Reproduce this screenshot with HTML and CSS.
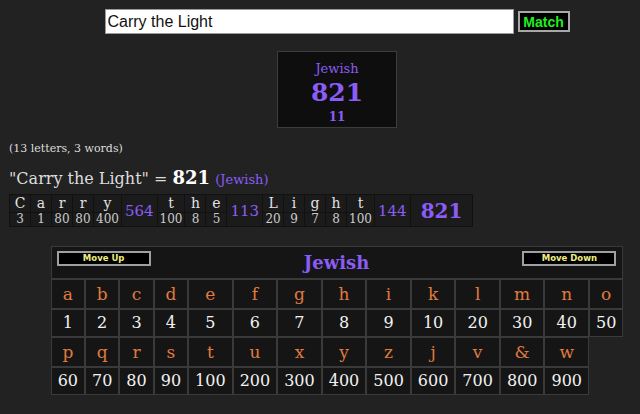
FILE: index.html
```html
<!DOCTYPE html>
<html>
<head>
<meta charset="utf-8">
<title>Gematria - Carry the Light</title>
<link rel="stylesheet" href="styles.css">
</head>
<body>
<div class="top">
  <form class="search">
    <input class="query" type="text" value="Carry the Light">
    <button class="match" type="button">Match</button>
  </form>
  <div class="scorebox">
    <div class="cipher">Jewish</div>
    <div class="total">821</div>
    <div class="reduced">11</div>
  </div>
</div>

<div class="counts">(13 letters, 3 words)</div>
<div class="phrase">"Carry the Light" = <b class="phrase-total">821</b> <span class="cname">(Jewish)</span></div>

<table class="breakdown">
  <tr>
    <td class="bl">C</td><td class="bl">a</td><td class="bl">r</td><td class="bl">r</td><td class="bl">y</td>
    <td class="bsum" rowspan="2">564</td>
    <td class="bl">t</td><td class="bl">h</td><td class="bl">e</td>
    <td class="bsum" rowspan="2">113</td>
    <td class="bl">L</td><td class="bl">i</td><td class="bl">g</td><td class="bl">h</td><td class="bl">t</td>
    <td class="bsum" rowspan="2">144</td>
    <td class="btotal" rowspan="2">821</td>
  </tr>
  <tr>
    <td class="bn">3</td><td class="bn">1</td><td class="bn">80</td><td class="bn">80</td><td class="bn">400</td>
    <td class="bn">100</td><td class="bn">8</td><td class="bn">5</td>
    <td class="bn">20</td><td class="bn">9</td><td class="bn">7</td><td class="bn">8</td><td class="bn">100</td>
  </tr>
</table>

<div class="chartwrap">
<table class="chart">
  <tr>
    <td class="chart-head" colspan="14">
      <div class="head-row">
        <button class="move" type="button">Move Up</button>
        <span class="chart-title">Jewish</span>
        <button class="move" type="button">Move Down</button>
      </div>
    </td>
  </tr>
  <tr class="letters">
    <td>a</td><td>b</td><td>c</td><td>d</td><td>e</td><td>f</td><td>g</td><td>h</td><td>i</td><td>k</td><td>l</td><td>m</td><td>n</td><td>o</td>
  </tr>
  <tr class="values">
    <td>1</td><td>2</td><td>3</td><td>4</td><td>5</td><td>6</td><td>7</td><td>8</td><td>9</td><td>10</td><td>20</td><td>30</td><td>40</td><td>50</td>
  </tr>
  <tr class="letters">
    <td>p</td><td>q</td><td>r</td><td>s</td><td>t</td><td>u</td><td>x</td><td>y</td><td>z</td><td>j</td><td>v</td><td>&amp;</td><td>w</td>
  </tr>
  <tr class="values">
    <td>60</td><td>70</td><td>80</td><td>90</td><td>100</td><td>200</td><td>300</td><td>400</td><td>500</td><td>600</td><td>700</td><td>800</td><td>900</td>
  </tr>
</table>
</div>
</body>
</html>
```

FILE: styles.css
```css
html, body {
  margin: 0;
  padding: 0;
}
body {
  background: #222222;
  color: #dddddd;
  font-family: "DejaVu Serif", serif;
  width: 640px;
  height: 414px;
  overflow: hidden;
}

.top {
  padding: 9px 0 0 34px;
  display: flex;
  flex-direction: column;
  align-items: center;
}
.search {
  display: flex;
  align-items: center;
  gap: 4px;
  margin: 0;
}
.query {
  width: 409px;
  height: 25px;
  box-sizing: border-box;
  border: 1px solid #9a9a9a;
  background: #ffffff;
  color: #111111;
  font-family: "Liberation Sans", Arial, sans-serif;
  font-size: 16px;
  padding: 0 2px;
  margin: 0;
  outline: none;
}
.match {
  width: 52px;
  height: 21px;
  box-sizing: border-box;
  background: #000000;
  border: 2px solid #a8a8a8;
  color: #22ee22;
  font-family: "Liberation Sans", Arial, sans-serif;
  font-weight: bold;
  font-size: 14px;
  padding: 0;
  margin: 0;
}

.scorebox {
  margin-top: 17px;
  width: 120px;
  height: 77px;
  box-sizing: border-box;
  background: #0e0e0e;
  border: 1px solid #3c3c3c;
  display: flex;
  flex-direction: column;
  align-items: center;
  padding-top: 9px;
  color: #8b5cf6;
}
.cipher {
  font-size: 13px;
  line-height: 16px;
}
.total {
  font-size: 25px;
  font-weight: bold;
  line-height: 32px;
}
.reduced {
  font-size: 12px;
  font-weight: bold;
  line-height: 16px;
}

.counts {
  margin: 14px 0 0 9px;
  font-size: 11px;
  line-height: 14px;
  color: #dddddd;
}
.phrase {
  margin: 12px 0 0 9px;
  font-size: 16px;
  line-height: 20px;
  color: #dddddd;
}
.phrase-total {
  font-size: 18px;
  color: #ffffff;
}
.cname {
  font-size: 13px;
  color: #8b5cf6;
}

.breakdown {
  margin: 4px 0 0 9px;
  border-collapse: separate;
  border-spacing: 1px;
  background: #111111;
}
.breakdown td {
  background: #1b1b1b;
  text-align: center;
  padding: 0 2px;
}
.bl {
  min-width: 16px;
  font-size: 14px;
  line-height: 17px;
  color: #e2e2e2;
}
.bn {
  font-size: 12px;
  line-height: 13px;
  color: #cccccc;
}
.breakdown .bsum {
  font-size: 15px;
  color: #8b5cf6;
  padding: 0 3px;
}
.breakdown .btotal {
  font-size: 20px;
  font-weight: bold;
  color: #8b5cf6;
  padding: 0 10px;
}

.chartwrap {
  margin-top: 19px;
  padding-left: 34px;
  display: flex;
  justify-content: center;
}
.chart {
  border-collapse: separate;
  border-spacing: 0;
}
.chart td {
  background: #151515;
  border: 1px solid #3a3a3a;
  text-align: center;
  padding: 0 6px;
}
.chart .chart-head {
  padding: 4px 6px 3px 5px;
}
.head-row {
  display: flex;
  justify-content: space-between;
  align-items: flex-start;
}
.move {
  width: 94px;
  height: 15px;
  box-sizing: border-box;
  background: #000000;
  border: 2px solid #a0a0a0;
  color: #eeee80;
  font-family: "DejaVu Sans", sans-serif;
  font-weight: bold;
  font-size: 8.5px;
  line-height: 11px;
  padding: 0;
  margin: 0;
}
.chart-title {
  font-size: 18px;
  font-weight: bold;
  line-height: 24px;
  color: #8b5cf6;
}
.letters td {
  font-size: 17px;
  line-height: 28px;
  color: #e07b3f;
}
.values td {
  font-size: 16px;
  line-height: 26px;
  color: #f2f2f2;
}
```
